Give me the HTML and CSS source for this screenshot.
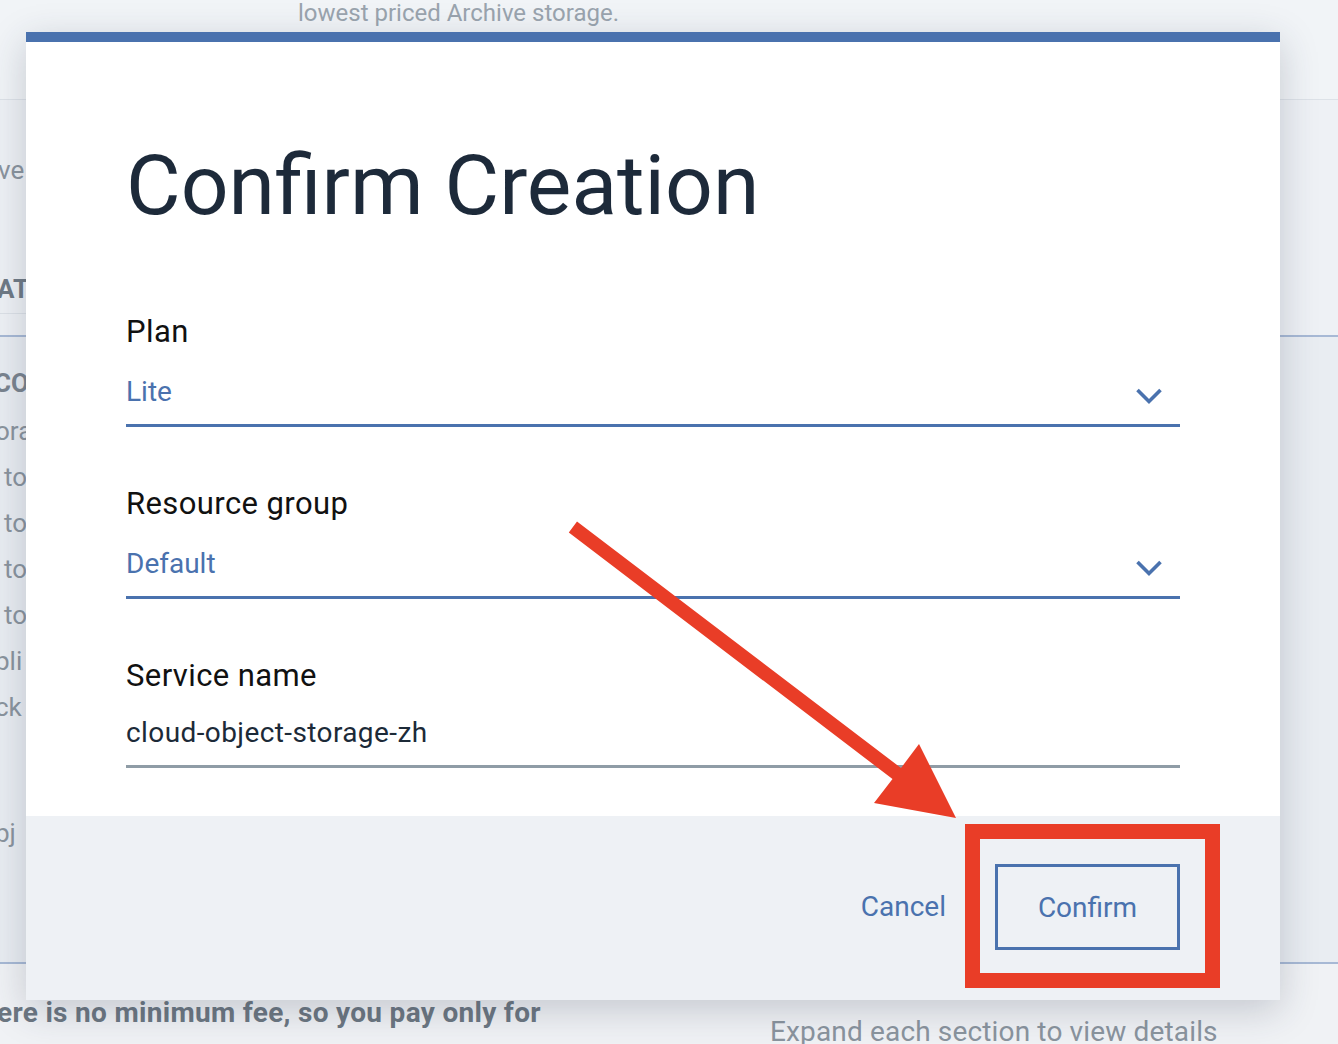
FILE: index.html
```html
<!DOCTYPE html>
<html lang="en">
<head>
<meta charset="utf-8">
<title>Confirm Creation</title>
<link rel="stylesheet" href="styles.css">
</head>
<body>
<div class="page">
  <div class="bg-top">
    <p class="bg-note">lowest priced Archive storage.</p>
  </div>
  <div class="bg-sec1">
    <div class="bg-col">
      <p class="frag frag-ve">ve</p>
      <p class="frag frag-head">AT</p>
    </div>
  </div>
  <div class="bg-sec2">
    <p class="frag frag-head frag-cos">COS</p>
    <p class="frag frag-cut">ora</p>
    <p class="frag frag-in">to</p>
    <p class="frag frag-in">to</p>
    <p class="frag frag-in">to</p>
    <p class="frag frag-in">to</p>
    <p class="frag frag-cut">pli</p>
    <p class="frag frag-cut">ck</p>
    <p class="frag frag-cut frag-last">bj</p>
  </div>
  <div class="bg-bottom">
    <p class="bg-fee">ere is no minimum fee, so you pay only for</p>
    <p class="bg-expand">Expand each section to view details</p>
  </div>
</div>

<div class="modal">
  <div class="modal-body">
    <h1 class="modal-title">Confirm Creation</h1>

    <div class="field">
      <div class="field-label">Plan</div>
      <div class="select">
        <span class="select-value">Lite</span>
        <svg class="chevron" viewBox="0 0 28 18" width="28" height="18"><path d="M2.5 3 L14 14.5 L25.5 3" fill="none" stroke="#4a72ae" stroke-width="3.6"/></svg>
      </div>
    </div>

    <div class="field">
      <div class="field-label">Resource group</div>
      <div class="select">
        <span class="select-value">Default</span>
        <svg class="chevron" viewBox="0 0 28 18" width="28" height="18"><path d="M2.5 3 L14 14.5 L25.5 3" fill="none" stroke="#4a72ae" stroke-width="3.6"/></svg>
      </div>
    </div>

    <div class="field">
      <div class="field-label field-label-input">Service name</div>
      <div class="text-input">cloud-object-storage-zh</div>
    </div>
  </div>
  <div class="modal-footer">
    <button class="btn-cancel" type="button">Cancel</button>
    <button class="btn-confirm" type="button">Confirm</button>
  </div>
</div>

<div class="highlight"></div>
<svg class="arrow" width="1338" height="1044" viewBox="0 0 1338 1044">
  <polygon points="577,521.5 901,768 919,744 956,818 874,803 892.5,779 568.8,532.5" fill="#e93d27"/>
</svg>
</body>
</html>
```

FILE: styles.css
```css
html, body {
  margin: 0;
  padding: 0;
}

body {
  width: 1338px;
  height: 1044px;
  overflow: hidden;
  position: relative;
  background: #f1f4f7;
  font-family: Roboto, "Liberation Sans", sans-serif;
}

p {
  margin: 0;
}

/* ---------- background page ---------- */
.page {
  width: 1338px;
  height: 1044px;
  display: flex;
  flex-direction: column;
}

.bg-top {
  height: 99px;
  flex: none;
  border-bottom: 1px solid #dde2e8;
  background: #f1f4f7;
}

.bg-note {
  padding-left: 298px;
  padding-top: 0;
  font-size: 24px;
  line-height: 26px;
  color: #9aa4ae;
}

.bg-sec1 {
  height: 235px;
  flex: none;
  border-bottom: 2px solid #a7b9d5;
  background: #eef1f5;
}

.bg-col {
  width: 400px;
  height: 213px;
  border-bottom: 1px solid #dce1e7;
}

.frag {
  font-size: 26px;
  line-height: 46px;
  color: #8a949e;
  white-space: nowrap;
}

.frag-ve {
  padding-top: 47px;
  margin-left: -2px;
}

.frag-head {
  font-weight: 700;
  color: #6f7a85;
  margin-top: 73px;
  margin-left: -3px;
}

.bg-sec2 {
  height: 627px;
  flex: none;
  border-bottom: 2px solid #a7b9d5;
  background: #e9edf2;
  padding-top: 23px;
  box-sizing: border-box;
}

.frag-cos {
  margin-top: 0;
  margin-left: -6px;
  color: #7a848f;
  margin-bottom: 2px;
}

.frag-cut {
  margin-left: -5px;
}

.frag-in {
  margin-left: 4px;
}

.frag-last {
  margin-top: 80px;
}

.bg-bottom {
  flex: 1;
  display: grid;
  grid-template-columns: 770px 1fr;
  background: #f0f2f5;
}

.bg-fee {
  margin-left: -3px;
  padding-top: 33px;
  font-size: 28px;
  line-height: 32px;
  font-weight: 700;
  letter-spacing: 0.3px;
  color: #6c7782;
  white-space: nowrap;
}

.bg-expand {
  padding-top: 52px;
  font-size: 28px;
  line-height: 32px;
  letter-spacing: 0.15px;
  color: #8a949e;
  white-space: nowrap;
}

/* ---------- modal ---------- */
.modal {
  position: absolute;
  left: 26px;
  top: 32px;
  width: 1254px;
  background: #ffffff;
  border-top: 10px solid #4a72ae;
  box-shadow: 0 10px 36px rgba(40, 52, 72, 0.22);
}

.modal-body {
  padding: 102px 100px 48px;
}

.modal-title {
  margin: 0 0 86px;
  font-size: 84px;
  line-height: 84px;
  font-weight: 400;
  color: #1d2a3a;
}

.field + .field {
  margin-top: 59px;
}

.field-label {
  font-size: 31px;
  line-height: 36px;
  letter-spacing: 0.4px;
  color: #111111;
  margin-bottom: 24px;
}

.field-label-input {
  margin-bottom: 21px;
}

.select {
  display: flex;
  justify-content: space-between;
  align-items: center;
  padding-bottom: 14px;
  border-bottom: 3px solid #4a72ae;
}

.select-value {
  font-size: 28px;
  line-height: 36px;
  color: #4a72ae;
}

.chevron {
  margin-right: 17px;
  margin-top: 8px;
}

.text-input {
  font-size: 28px;
  line-height: 36px;
  letter-spacing: 0.4px;
  color: #1c2a38;
  padding-bottom: 14px;
  border-bottom: 3px solid #8f9ca6;
}

.modal-footer {
  background: #eef1f5;
  padding: 48px 100px 50px;
  display: flex;
  justify-content: flex-end;
  align-items: center;
  gap: 49px;
}

.btn-cancel {
  border: none;
  background: transparent;
  padding: 0;
  font-family: inherit;
  font-size: 28px;
  line-height: 36px;
  color: #4a72ae;
}

.btn-confirm {
  width: 185px;
  height: 86px;
  box-sizing: border-box;
  border: 3px solid #4a72ae;
  background: transparent;
  font-family: inherit;
  font-size: 28px;
  color: #4a72ae;
  padding: 0;
}

/* ---------- annotations ---------- */
.highlight {
  position: absolute;
  left: 965px;
  top: 824px;
  width: 255px;
  height: 164px;
  box-sizing: border-box;
  border: 15px solid #e93d27;
}

.arrow {
  position: absolute;
  left: 0;
  top: 0;
  pointer-events: none;
}
```
